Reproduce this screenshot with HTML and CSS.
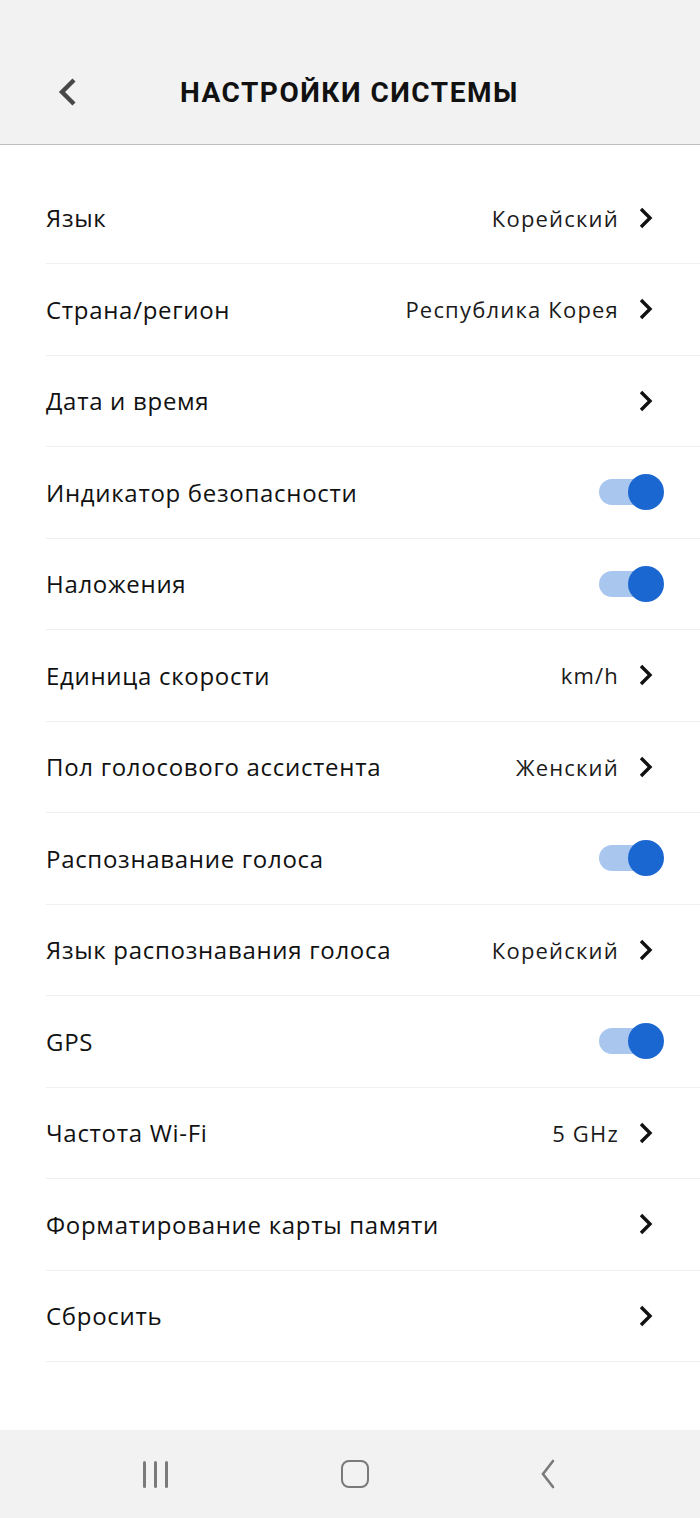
FILE: index.html
```html
<!DOCTYPE html>
<html lang="ru">
<head>
  <meta charset="UTF-8" />
  <title>Настройки системы</title>
  <link rel="stylesheet" href="styles.css">
</head>
<body>
  <div class="screen">
    <header class="topbar">
      <button class="back-btn" type="button" aria-label="Назад">
        <svg width="24" height="30" viewBox="0 0 24 30"><path d="M19 3 L7 15 L19 27" fill="none" stroke="#474747" stroke-width="4.4" stroke-linejoin="miter"/></svg>
      </button>
      <h1>НАСТРОЙКИ СИСТЕМЫ</h1>
    </header>

    <ul class="settings">
      <li class="row">
        <span class="label">Язык</span>
        <span class="value">Корейский</span>
        <svg class="chev" width="16" height="22" viewBox="0 0 16 22"><path d="M3 2 L12 11 L3 20" fill="none" stroke="#111" stroke-width="3.4"/></svg>
      </li>
      <li class="row">
        <span class="label">Страна/регион</span>
        <span class="value">Республика Корея</span>
        <svg class="chev" width="16" height="22" viewBox="0 0 16 22"><path d="M3 2 L12 11 L3 20" fill="none" stroke="#111" stroke-width="3.4"/></svg>
      </li>
      <li class="row">
        <span class="label">Дата и время</span>
        <svg class="chev" width="16" height="22" viewBox="0 0 16 22"><path d="M3 2 L12 11 L3 20" fill="none" stroke="#111" stroke-width="3.4"/></svg>
      </li>
      <li class="row">
        <span class="label">Индикатор безопасности</span>
        <span class="toggle on"></span>
      </li>
      <li class="row">
        <span class="label">Наложения</span>
        <span class="toggle on"></span>
      </li>
      <li class="row">
        <span class="label">Единица скорости</span>
        <span class="value">km/h</span>
        <svg class="chev" width="16" height="22" viewBox="0 0 16 22"><path d="M3 2 L12 11 L3 20" fill="none" stroke="#111" stroke-width="3.4"/></svg>
      </li>
      <li class="row">
        <span class="label">Пол голосового ассистента</span>
        <span class="value">Женский</span>
        <svg class="chev" width="16" height="22" viewBox="0 0 16 22"><path d="M3 2 L12 11 L3 20" fill="none" stroke="#111" stroke-width="3.4"/></svg>
      </li>
      <li class="row">
        <span class="label">Распознавание голоса</span>
        <span class="toggle on"></span>
      </li>
      <li class="row">
        <span class="label">Язык распознавания голоса</span>
        <span class="value">Корейский</span>
        <svg class="chev" width="16" height="22" viewBox="0 0 16 22"><path d="M3 2 L12 11 L3 20" fill="none" stroke="#111" stroke-width="3.4"/></svg>
      </li>
      <li class="row">
        <span class="label">GPS</span>
        <span class="toggle on"></span>
      </li>
      <li class="row">
        <span class="label">Частота Wi-Fi</span>
        <span class="value">5 GHz</span>
        <svg class="chev" width="16" height="22" viewBox="0 0 16 22"><path d="M3 2 L12 11 L3 20" fill="none" stroke="#111" stroke-width="3.4"/></svg>
      </li>
      <li class="row">
        <span class="label">Форматирование карты памяти</span>
        <svg class="chev" width="16" height="22" viewBox="0 0 16 22"><path d="M3 2 L12 11 L3 20" fill="none" stroke="#111" stroke-width="3.4"/></svg>
      </li>
      <li class="row">
        <span class="label">Сбросить</span>
        <svg class="chev" width="16" height="22" viewBox="0 0 16 22"><path d="M3 2 L12 11 L3 20" fill="none" stroke="#111" stroke-width="3.4"/></svg>
      </li>
    </ul>

    <nav class="navbar">
      <span class="nav-recent"><i></i><i></i><i></i></span>
      <span class="nav-home"></span>
      <svg class="nav-back" width="18" height="30" viewBox="0 0 18 30"><path d="M14 2 L4 15 L14 28" fill="none" stroke="#7a7a7a" stroke-width="2.6" stroke-linecap="round"/></svg>
    </nav>
  </div>
</body>
</html>
```

FILE: styles.css
```css
html, body {
  margin: 0;
  padding: 0;
  background: #fff;
}
body {
  font-family: "Open Sans", "Noto Sans", sans-serif;
  color: #111;
}
.screen {
  width: 700px;
  height: 1518px;
  display: flex;
  flex-direction: column;
}
.topbar {
  background: #f2f2f2;
  border-bottom: 1px solid #bdbdbd;
  height: 104px;
  padding-top: 40px;
  display: flex;
  align-items: center;
  flex-shrink: 0;
}
.back-btn {
  background: none;
  border: none;
  padding: 0;
  margin-left: 55px;
  width: 24px;
  height: 30px;
  cursor: pointer;
}
.back-btn svg {
  display: block;
}
.topbar h1 {
  margin: 0 0 0 101px;
  font-family: Roboto, "Noto Sans", sans-serif;
  font-weight: 700;
  font-size: 28px;
  letter-spacing: 1.5px;
  color: #111;
}
.settings {
  list-style: none;
  margin: 0;
  padding: 27.5px 0 0 46px;
  flex: 1;
}
.row {
  height: 90.5px;
  border-bottom: 1px solid #efefef;
  display: flex;
  align-items: center;
  padding-right: 46px;
}
.label {
  flex: 1;
  font-size: 24px;
  letter-spacing: 0.7px;
  color: #111;
}
.value {
  font-size: 22px;
  letter-spacing: 1.2px;
  color: #1a1a1a;
  margin-right: 19px;
}
.chev {
  display: block;
}
.toggle {
  position: relative;
  width: 52px;
  height: 26px;
  border-radius: 13px;
  background: #a9c6ee;
  margin-right: 3px;
}
.toggle.on::after {
  content: "";
  position: absolute;
  right: -13px;
  top: -5px;
  width: 36px;
  height: 36px;
  border-radius: 50%;
  background: #1b67d2;
}
.navbar {
  height: 88px;
  background: #f2f2f2;
  flex-shrink: 0;
  display: flex;
  align-items: center;
  justify-content: space-between;
  padding: 0 143px;
}
.nav-recent {
  display: flex;
  gap: 8px;
  width: 27px;
}
.nav-recent i {
  width: 3px;
  height: 27px;
  border-radius: 2px;
  background: #7a7a7a;
}
.nav-home {
  width: 24px;
  height: 24px;
  border: 2.6px solid #7a7a7a;
  border-radius: 8px;
}
.nav-back {
  display: block;
}
```
